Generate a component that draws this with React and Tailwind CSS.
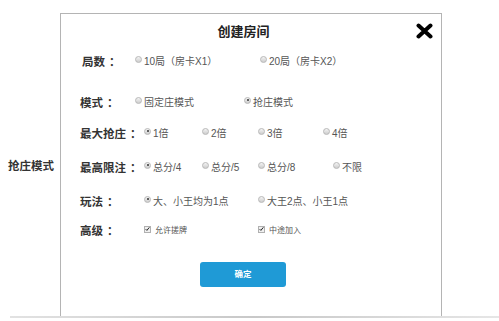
import React from "react";

const FONT = { fontFamily: '"Liberation Sans", "Noto Sans CJK SC", sans-serif' };

function Radio({ checked }) {
  return (
    <span className="relative -top-[3px] inline-block w-[7px] h-[7px] shrink-0 rounded-full border border-[#b8b8b8] bg-linear-to-b from-[#f4f4f4] to-[#cdcdcd]">
      {checked && (
        <span className="absolute left-[1.5px] top-[1.5px] w-[2px] h-[2px] rounded-full bg-[#333]" />
      )}
    </span>
  );
}

function Check() {
  return (
    <span className="relative -top-[2px] inline-flex items-center justify-center w-[7px] h-[7px] shrink-0 border border-[#b0b0b0] bg-[#f0f0f0]">
      <svg width="6" height="6" viewBox="0 0 6 6">
        <path d="M0.8 3.2 L2.3 4.7 L5.2 1" fill="none" stroke="#222" strokeWidth="1.2" />
      </svg>
    </span>
  );
}

function Opt({ w, checked, children }) {
  return (
    <div className={`flex items-center gap-[2px] ${w}`}>
      <Radio checked={checked} />
      <span className="text-[10px] leading-[14px] text-[#555] whitespace-nowrap">{children}</span>
    </div>
  );
}

function CheckOpt({ w, children }) {
  return (
    <div className={`flex items-center gap-[4px] ${w}`}>
      <Check />
      <span className="text-[8px] leading-[12px] text-[#555] whitespace-nowrap">{children}</span>
    </div>
  );
}

function Label({ children, w }) {
  return (
    <div className={`${w} shrink-0 flex items-center text-[11.5px] leading-[16px] font-bold text-[#333] whitespace-nowrap`}>
      <span>{children}</span>
      <span className="ml-[4px]">：</span>
    </div>
  );
}

export default function App() {
  return (
    <div className="w-[499px] h-[321px] bg-white overflow-hidden" style={FONT}>
      <div className="flex h-[316px]">
        <div className="w-[60px] shrink-0 flex items-center pt-[16px] pl-[8px]">
          <span className="text-[11.5px] leading-[16px] font-bold text-[#333] whitespace-nowrap">抢庄模式</span>
        </div>
        <div className="mt-[13px] w-[382px] h-[303px] border-l border-r border-t border-[#b4b4b4] flex flex-col pl-[19px]">
          <div className="h-[36px] flex items-center relative">
            <div className="w-full flex justify-center pr-[34px]">
              <span className="text-[13px] leading-[18px] font-bold text-[#222]">创建房间</span>
            </div>
            <svg className="absolute left-[336px] top-[9px]" width="17" height="16" viewBox="0 0 17 16">
              <path d="M2.5 2.5 L14.5 13.5 M14.5 2.5 L2.5 13.5" stroke="#000" strokeWidth="4" strokeLinecap="round" />
            </svg>
          </div>

          <div className="h-[24px] flex items-center">
            <Label w="w-[55px] pl-[2px]">局数</Label>
            <Opt w="w-[125px]">10局（房卡X1）</Opt>
            <Opt w="w-[120px]">20局（房卡X2）</Opt>
          </div>

          <div className="mt-[17px] h-[24px] flex items-center">
            <Label w="w-[55px]">模式</Label>
            <Opt w="w-[109px]">固定庄模式</Opt>
            <Opt w="w-[100px]" checked>抢庄模式</Opt>
          </div>

          <div className="mt-[7px] h-[24px] flex items-center">
            <Label w="w-[64px]">最大抢庄</Label>
            <Opt w="w-[58px]" checked>1倍</Opt>
            <Opt w="w-[56px]">2倍</Opt>
            <Opt w="w-[65px]">3倍</Opt>
            <Opt w="w-[40px]">4倍</Opt>
          </div>

          <div className="mt-[10px] h-[24px] flex items-center">
            <Label w="w-[64px]">最高限注</Label>
            <Opt w="w-[58px]" checked>总分/4</Opt>
            <Opt w="w-[56px]">总分/5</Opt>
            <Opt w="w-[75px]">总分/8</Opt>
            <Opt w="w-[40px]">不限</Opt>
          </div>

          <div className="mt-[10px] h-[24px] flex items-center">
            <Label w="w-[64px]">玩法</Label>
            <Opt w="w-[114px]" checked>大、小王均为1点</Opt>
            <Opt w="w-[110px]">大王2点、小王1点</Opt>
          </div>

          <div className="mt-[5px] h-[24px] flex items-center">
            <Label w="w-[64px]">高级</Label>
            <CheckOpt w="w-[114px]">允许搓牌</CheckOpt>
            <CheckOpt w="w-[100px]">中途加入</CheckOpt>
          </div>

          <div className="mt-[19px] flex">
            <button className="ml-[120px] w-[86px] h-[25px] rounded-[3px] bg-[#1f9ad6] text-white text-[8.5px] font-bold leading-none flex items-center justify-center">
              确定
            </button>
          </div>
        </div>
      </div>
      <div className="ml-[10px] h-[2px] bg-linear-to-r from-[#e2e2e2] via-[#c8c8c8] to-[#e6e6e6]" />
    </div>
  );
}
